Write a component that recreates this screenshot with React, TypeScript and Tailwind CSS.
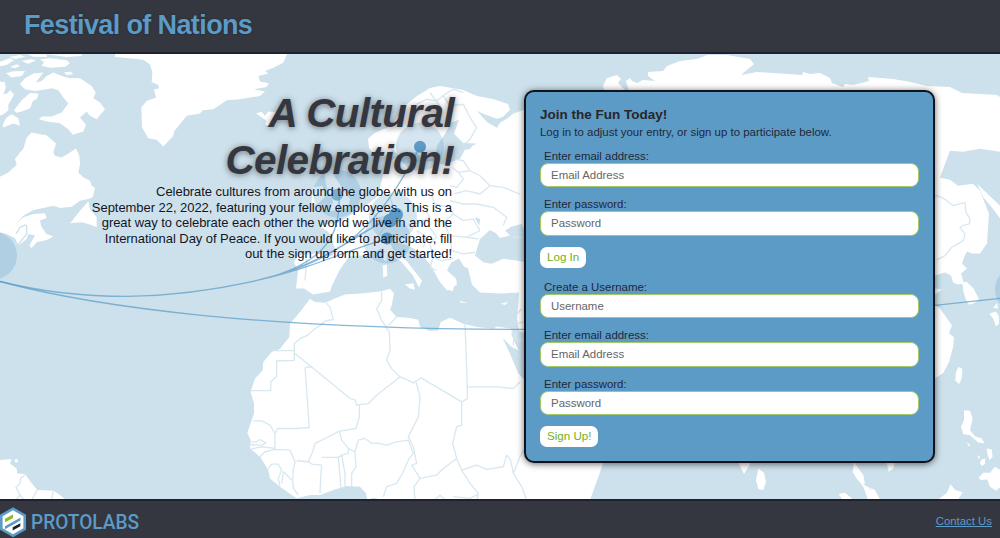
import React from "react";

const LAND = "#ffffff";
const SEA = "#cde1ec";
const BORDER = "#d8e8f1";

function WorldMap() {
  return (
    <svg
      className="absolute inset-0 h-full w-full"
      viewBox="0 53 1000 446"
      preserveAspectRatio="none"
      aria-hidden="true"
    >
      <rect x="0" y="53" width="1000" height="446" fill={SEA} />

      {/* North America and Greenland */}
      <g transform="scale(.33333)" fill={LAND} strokeLinejoin="round">
        <path d="M345 150V168L380 171 430 176 450 190 457 215 455 243 475 252 477 262 462 266 468 290 440 300 424 320 426 380 445 412 470 417 490 437 520 405 522 392 560 345 600 338 608 328 640 325 680 298 720 295 780 285 795 272 762 265 800 258 806 247 780 242 775 225 805 218 795 210 820 200 850 185 865 150Z" />
        <path d="M160 215L185 225 210 232 240 232 275 255 287 275 280 292 300 305 315 325 290 355 270 345 260 332 240 350 258 372 250 392 218 402 205 385 180 367 140 362 117 355 125 347 155 347 185 335 205 308 190 290 175 268 155 262 140 265 105 270 75 265 60 250 75 232 100 218 130 215 120 228 107 245 125 240 140 225Z" />
        <path d="M0 528L25 515 50 492 45 475 60 455 70 445 80 410 95 395 120 400 140 403 150 412 168 428 160 455 165 465 185 470 205 458 228 443 238 465 240 490 235 515 250 530 270 540 275 555 285 562 278 590 265 595 240 600 215 618 180 622 160 615 130 622 100 628 70 645 45 672 70 650 100 640 135 638 140 652 120 660 125 680 140 700 160 708 140 718 110 725 95 742 88 735 105 705 85 700 80 715 55 735 45 712 20 700 0 695Z" />
        <path d="M265 602L270 625 290 650 290 680 270 672 245 665 210 668 225 650 240 630Z" />
        <path d="M120 175L150 172 200 178 210 187 195 197 150 200 125 194 132 184Z" />
        <path d="M82 160H140V168L100 167Z" /><path d="M140 160H245V165L200 168Z" />
        <path d="M18 217L40 211 75 210 65 225 35 230Z" />
        <path d="M0 182L30 172 42 178 20 192 0 196Z" /><path d="M28 168L60 162 75 167 45 174Z" />
        <path d="M30 198L50 190 60 195 45 202Z" /><path d="M65 180L92 175 108 178 85 188Z" />
        <path d="M0 242L15 244 17 262 10 280 22 278 30 268 42 280 35 295 25 310 25 328 10 340 0 345Z" />
        <path d="M42 328L65 298 90 276 115 278 112 292 98 302 90 322 65 332 50 336Z" />
        <path d="M8 372L20 350 35 340 55 352 60 375 40 368 10 380Z" />
        <path d="M192 214L212 212 220 220 200 222Z" />
        <path d="M48 700L60 680 78 672M80 674L80 700 52 735" fill="none" stroke={SEA} strokeWidth="4" />
      </g>

      {/* South America */}
      <g transform="translate(0 250) scale(.33333)" fill={LAND}>
        <path d="M0 630L35 627 30 640 50 655 52 670 75 672 95 700 112 720 160 722 180 735 200 752H0Z" />
        <circle cx="49" cy="632" r="5" />
        <path d="M75 674L62 685 60 700 48 712 60 735 50 748M60 735L72 750M112 720L96 748M160 724L154 750" fill="none" stroke={BORDER} strokeWidth="4" />
      </g>

      {/* Europe and Asia */}
      <path
        fill={LAND}
        d="M368 138L375 132 387 127 393 122 400 113 407 103 417 95 430 87 440 85 463 89 477 95 493 98 508 103 510 109 503 116 497 118 483 113 477 110 483 117 488 122 497 127 500 122 507 118 513 113 524 109L560 105 600 100 630 94 626 80 630 77 632 80 637 82 643 79 655 80 648 75 648 71 663 70 667 65 680 60 697 58 707 54 727 54 750 58 754 63 741 74 757 71 802 74 803 71 810 73 820 72 830 77 832 82 843 86 845 83 853 84 869 80 868 76 893 78 910 81 927 85 950 86 962 92 997 94 1000 96V151L980 148 963 151 950 150 945 163 940 177 950 179 958 185 973 183 980 190 989 213 987 243 980 253 972 253 967 251 964 257 962 263 967 268 961 273 964 283 958 284 953 282 951 275 945 272 935 275 930 284 935 288 942 289 935 294 932 303 940 308 952 325 949 333 954 337 953 347 949 362 943 373 935 378L900 390 770 400 750 464 744 474 737 460 700 390 620 400 575 400 528 335 519 330 517 318 519 292 500 293 480 292 472 284 468 268 464 266 459 258 451 262 447 270 456 278 457 284 447 290 439 280 431 265 420 252 410 246 399 242 389 239 393 249 407 261 414 270 422 280 419 287 413 275 401 261 391 255 381 248 370 254 361 255 349 256 340 269 332 285 330 291 313 294 304 288 296 288 298 270 294 262 298 255 315 253 332 256 335 248 329 232 319 225 338 222 348 216 368 203 378 195 381 183 384 170 388 162 397 156 405 163 420 161 430 160 444 164 460 158 466 147 477 143 463 142 454 133 459 119 451 122 445 133 437 145 435 157 424 160 416 151 410 152 401 157 393 149 383 156 374 154 369 147Z"
      />
      <path d="M603 85L607 77 617 74 621 78 618 82 625 89 629 94H606Z" fill={LAND} />
      <g transform="translate(250 50) scale(.33333)" fill={LAND}>
        <path d="M18 188L35 183 45 195 55 182 78 184 80 220 60 225 45 222 50 210Z" />
        <path d="M222 365L250 358 256 380 275 410 300 445 296 466 270 478 230 482 250 455 240 430 230 410Z" />
        <path d="M190 410L218 405 224 440 200 462 184 455Z" />
        <path d="M398 645L410 642 412 675 400 682ZM402 606L412 603 410 632 400 628Z" />
      </g>
      {/* Inland seas */}
      <g transform="translate(250 50) scale(.33333)" fill={SEA}>
        <path d="M675 615L690 565 720 538 738 548 750 562 780 555 765 540 785 528 815 520 830 560 850 640 800 630 760 625 725 640 700 635Z" />
        <path d="M608 310L622 290 660 285 674 277 660 295 625 300 630 325 615 328Z" />
        <path d="M690 505L675 500 678 508 688 525Z" />
      </g>

      {/* Africa */}
      <g transform="translate(230 270) scale(.33333)">
        <path fill={LAND} d="M240 85L255 95 285 97 320 82 345 72 400 68 455 62 480 55 492 68 485 105 480 118 500 140 540 143 565 148 570 170 600 182 625 180 632 155 660 142 700 160 740 170 790 175 800 168 845 175 845 195 865 240 900 350 1000 560 1120 578 1080 690H460L430 683 412 690 408 670 390 650 350 648 310 660 270 675 240 675 200 685 150 650 120 625 115 600 90 560 60 535 62 510 52 488 72 430 72 400 62 365 75 325 98 300 100 275 125 245 150 235 178 200 180 160 210 125Z" />
        <path fill={SEA} d="M818 203L845 230 865 240 885 265V330L865 310 840 250Z" />
        <path fill={LAND} d="M525 42L550 38 555 58 540 54ZM645 38L675 38 668 62 652 58ZM812 100L835 94 825 104ZM690 92L715 97 690 96Z" />
        <g fill="none" stroke={BORDER} strokeWidth="4" strokeLinejoin="round">
          <path d="M288 97L300 110 310 148 290 150 270 165 255 175 232 195 210 205 193 220V270L140 272V318L122 335V361H62M125 241H193M193 248L245 290 345 372 360 385 375 388 380 405 388 403 415 400 440 375 510 320M455 62V90L440 115 455 150 465 165 478 185 480 240 470 270 485 295 510 320M500 140L475 165M510 320L530 328 550 338 573 323 695 395 712 385V350H800L850 355 870 335M712 350L705 160M228 290H245M225 290L238 472 200 475 142 475 135 490 120 465 95 452H70M388 405V440L378 475 328 483 285 505 255 520 248 545 235 575 200 572" />
          <path d="M62 515H80L90 508 108 518 95 525 60 524M62 537L95 530 135 535 135 490M90 560L105 545 135 538 180 540 195 575 190 600 188 632 160 605 155 640M115 595L125 582 145 582 155 600 145 625 150 650M188 632L190 655 205 675M235 575L245 582 275 585 272 625 270 670M275 562H325L333 655M325 562L335 555 345 610 345 650M335 555L355 550 355 535 335 510 328 483M355 535L375 545 378 590 365 610V648M375 545L385 510 405 505 425 520 440 518 470 525 500 515 535 510 550 550 535 570 520 605 500 640 470 650 460 680M558 335L570 380 565 440 535 500 550 530 560 580 545 585 570 625 552 650 555 690M695 395V465L680 470 668 520 680 565 660 580 635 600 620 615 570 625M680 565L695 600 720 640 745 670 740 690M695 600L740 585 770 598 820 590 830 555 842 570 850 610 875 650 890 690M850 610L870 560 880 540M615 690L630 675 645 690M670 680L720 685 745 672M845 175L852 195 850 225M862 130L875 115M865 160L880 155M860 212L880 210M858 180V210" />
        </g>
      </g>
      {/* European borders */}
      <g transform="translate(250 50) scale(.33333)" fill="none" stroke={BORDER} strokeWidth="4" strokeLinejoin="round">
        <path d="M500 160L530 145 560 150 585 130 610 115 640 125M540 125L570 165 560 190M580 135L600 165 640 160 660 200 680 230 660 265 640 282M615 325L640 330 660 360 625 365 608 350M625 365L640 385 620 410 600 405M660 360L690 375 720 405 690 430 650 420 610 430M600 450L640 460 680 460 730 470 770 500 760 525M540 420L555 460 600 470 610 490 580 515 550 510M520 470L540 500 500 520 480 510M610 490L640 510 670 505 690 540M580 515L600 555 650 560 685 565M600 555L605 600 640 610 675 605M540 530L560 560 540 580 550 620 575 630 610 625M500 540L530 560 520 590M350 460L370 490 410 520 390 550 370 570M420 440L430 470M720 405L760 410 810 430M790 560L820 560M170 625L165 690M550 620L540 650 560 660M650 560L690 540" />
        <path d="M2055 433L2075 440 2090 450 2110 465 2145 456 2148 485 2160 505 2158 520 2140 524 2130 530 2145 550 2140 570 2120 582 2105 590 2085 615 2060 628" />
      </g>

      {/* East Asian islands */}
      <g transform="translate(750 50) scale(.33333)" fill={LAND}>
        <path d="M682 400L750 465V503L725 470 700 440Z" />
        <path d="M740 290L743 255 752 258V305Z" />
      </g>
      <g transform="translate(925 220) scale(.33333)" fill={LAND}>
        <path d="M112 186L125 184 145 203 162 236 150 247 132 253 122 236 115 212Z" />
      </g>
      <g transform="translate(750 290) scale(.33333)" fill={LAND}>
        <path d="M718 70L738 63 747 78 747 100 738 108 730 85ZM730 52L741 38 744 54Z" />
        <path d="M625 230L637 235 635 265 627 282 616 270 618 245Z" />
        <path d="M642 360L660 362 668 385 660 420 675 438 695 445 704 460 685 457 660 435 640 432 633 410 642 390Z" />
        <path d="M650 455L660 465 657 470ZM682 495L690 500 687 508ZM710 475L725 478 728 500 718 510 712 490ZM695 508L706 505 705 520 697 528 690 520Z" />
        <path d="M686 562L700 548 720 548 735 530 752 540V590L738 602 720 590 712 568 692 570Z" />
        <path d="M25 535L42 548 48 575 40 600 25 598 18 570ZM410 515H435L430 535 416 545Z" />
        <path d="M266 612L285 608 305 625V640H285ZM312 515L322 530 340 555 345 585 375 600 392 632H355L340 590 320 565 308 545Z" />
        <path d="M563 632L575 620 590 610 602 583 615 600 638 607 622 632Z" />
        <path d="M340 582L355 590 365 600" fill="none" stroke={SEA} strokeWidth="3" />
      </g>

      {/* Location halos */}
      <g fill="#5b9bc6" fillOpacity=".25">
        <circle cx="-7" cy="255" r="24" />
        <circle cx="420" cy="146" r="24" />
        <circle cx="337" cy="193" r="24" />
        <circle cx="393" cy="216" r="24" />
        <circle cx="387" cy="239" r="24" />
        <circle cx="1019" cy="289" r="24" />
      </g>
      <g fill="#5b9bc6">
        <circle cx="420" cy="146" r="6" />
        <circle cx="337" cy="194" r="6" fillOpacity=".75" />
        <circle cx="396" cy="214" r="7" />
        <circle cx="390" cy="220" r="7" />
        <circle cx="387" cy="238" r="6" />
      </g>
      <g fill="none" stroke="#5f9fca" strokeOpacity=".75" strokeWidth="1.3">
        <path d="M0 281Q60 296 127 296Q190 295 257 280" />
        <path d="M257 280C335 262 340 225 339 196M257 280C350 258 380 220 418 150M257 280C330 262 350 235 390 218M257 280C320 265 340 252 387 238M257 280C330 262 370 225 396 214" />
        <path d="M0 281C100 308 270 329 523 329H600L935 305 1000 298" />
      </g>
    </svg>
  );
}

function Field({ label, placeholder, type = "text" }: { label: string; placeholder: string; type?: string }) {
  return (
    <label className="mb-[11.2px] block">
      <span className="block h-[13px] pl-1 text-[11.45px] leading-[13px] text-[#242736]">{label}</span>
      <input
        type={type}
        placeholder={placeholder}
        className="block h-[24.3px] w-full rounded-[8px] border border-[#a3c96b] bg-white px-[10px] pb-px text-[11.45px] leading-4 placeholder:text-[#666666] placeholder:opacity-100"
      />
    </label>
  );
}

function PillButton({ children }: { children: React.ReactNode }) {
  return (
    <button className="block h-[21px] rounded-[7px] bg-white px-[7px] pb-px text-[11.6px] leading-[20px] text-[#72b01d]">
      {children}
    </button>
  );
}

function Logo() {
  return (
    <svg className="overflow-visible" width="160" height="34" viewBox="0 0 160 34" role="img" aria-label="Protolabs">
      <path d="M13 1.2L26 8.7V23.7L13 31.2 0 23.7V8.7Z" fill="#5b9bc8" />
      <path d="M13 4.2L23.4 10.2V22.2L13 28.2 2.6 22.2V10.2Z" fill="#fff" />
      <path d="M5 12.7L13 8.5V12L5 16.3Z" fill="#86bc25" />
      <path d="M5 20.2L20.5 11.4V14.4L5 23.2Z" fill="#5b9bc8" />
      <path d="M12.7 21.3L20.3 17.2V20.3L12.7 24.5Z" fill="#20222e" />
      <text x="31" y="23" textLength="108" lengthAdjust="spacingAndGlyphs" fontFamily="Roboto, sans-serif" fontWeight="500" fontSize="19.5" fill="#5b9bc8">
        PROTOLABS
      </text>
    </svg>
  );
}

export default function App() {
  return (
    <div className="flex h-[538px] w-[1000px] flex-col overflow-hidden bg-[#353740] font-['Liberation_Sans',Arial,sans-serif]">
      <header className="h-[54px] shrink-0 border-b-2 border-[#20212f] pl-6 pt-[9px]">
        <h1 className="text-[27px] leading-[32px] font-bold tracking-[-0.62px] text-[#5b9bc8] [text-shadow:0_0_2px_#222]">Festival of Nations</h1>
      </header>

      <main className="relative h-[445px] shrink-0">
        <WorldMap />
        <div className="relative flex h-full pt-[36px]">
          <section className="w-[452px] text-right">
            <h2 className="-mr-[2px] text-[40.5px] leading-[47px] font-bold tracking-[-0.65px] italic text-[#353740] [text-shadow:0_1px_6px_rgba(0,0,0,0.5)]">
              A Cultural
              <br />
              Celebration!
            </h2>
            <p className="text-[13px] leading-[15.6px] tracking-[-0.05px] whitespace-nowrap text-[#14151f]">
              Celebrate cultures from around the globe with us on
              <br />
              September 22, 2022, featuring your fellow employees. This is a
              <br />
              great way to celebrate each other the world we live in and the
              <br />
              International Day of Peace. If you would like to participate, fill
              <br />
              out the sign up form and get started!
            </p>
          </section>

          <section className="ml-[72px] h-[373px] w-[411px] rounded-[10px] border-2 border-[#11131c] bg-[#5b9bc6] px-[14px] pt-[15px] shadow-[0_1px_7px_rgba(0,0,0,0.6)]">
            <h3 className="text-[13.5px] leading-[16px] font-bold text-[#2a2528]">Join the Fun Today!</h3>
            <p className="mt-[2px] mb-[10px] text-[11.45px] leading-[15px] text-[#242736]">
              Log in to adjust your entry, or sign up to participate below.
            </p>
            <form>
              <Field label="Enter email address:" placeholder="Email Address" type="email" />
              <Field label="Enter password:" placeholder="Password" type="password" />
              <PillButton>Log In</PillButton>
            </form>
            <form className="mt-[13px]">
              <Field label="Create a Username:" placeholder="Username" />
              <Field label="Enter email address:" placeholder="Email Address" type="email" />
              <Field label="Enter password:" placeholder="Password" type="password" />
              <PillButton>Sign Up!</PillButton>
            </form>
          </section>
        </div>
      </main>

      <footer className="flex h-[39px] shrink-0 items-center justify-between border-t-2 border-[#20212f] pr-2">
        <div className="mt-[6px]">
          <Logo />
        </div>
        <a href="#contact" className="mt-[3px] text-[11.4px] leading-4 text-[#5b9bc8] underline">
          Contact Us
        </a>
      </footer>
    </div>
  );
}
